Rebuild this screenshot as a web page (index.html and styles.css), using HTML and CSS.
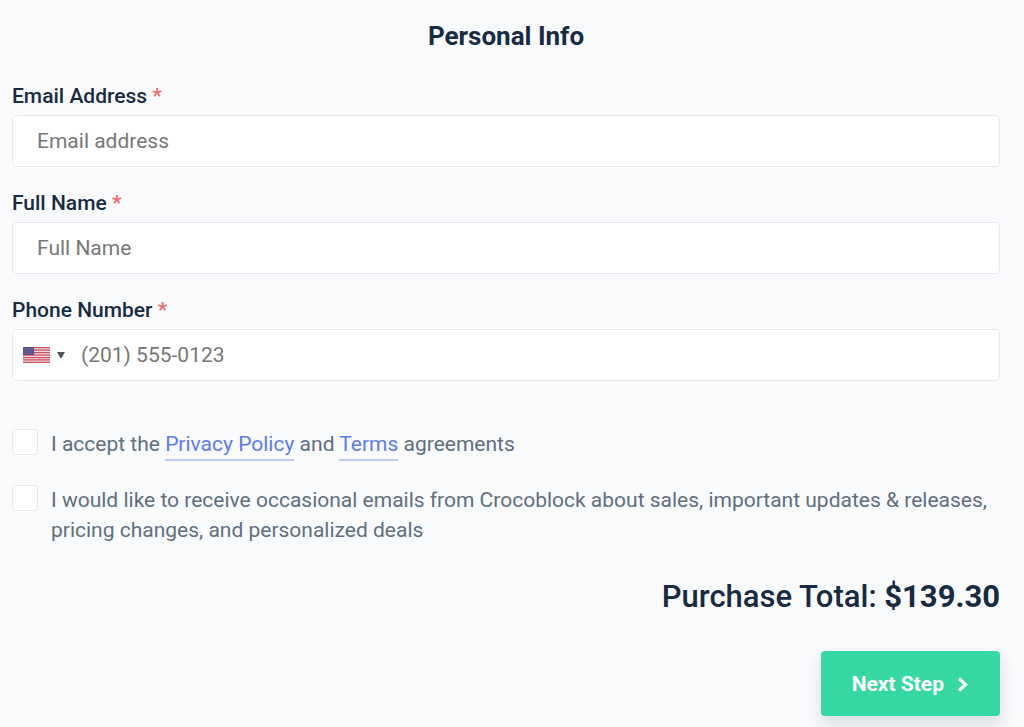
FILE: index.html
```html
<!DOCTYPE html>
<html lang="en">
<head>
<meta charset="utf-8">
<meta name="viewport" content="width=device-width, initial-scale=1">
<title>Personal Info</title>
<link rel="stylesheet" href="styles.css">
</head>
<body>
<form class="checkout">
  <h1 class="title">Personal Info</h1>
  <div class="fields">
    <div class="field">
      <label class="label" for="email">Email Address <span class="required">*</span></label>
      <input class="input" id="email" type="email" placeholder="Email address">
    </div>
    <div class="field">
      <label class="label" for="name">Full Name <span class="required">*</span></label>
      <input class="input" id="name" type="text" placeholder="Full Name">
    </div>
    <div class="field">
      <label class="label" for="phone">Phone Number <span class="required">*</span></label>
      <div class="phone">
        <button class="country" type="button" aria-label="Country: United States">
          <svg class="flag" viewBox="0 0 27 16" aria-hidden="true">
            <rect width="27" height="16" fill="#efd9dd"/>
            <path d="M0 .6h27M0 3.1h27M0 5.6h27M0 8h27M0 10.5h27M0 12.9h27M0 15.4h27" stroke="#d0505f" stroke-width="1.25"/>
            <rect width="11" height="8" fill="#5a5588"/>
            <path d="M1 1.5h10M1 4h10M1 6.5h10" stroke="#7773a0" stroke-width=".6" stroke-dasharray="1 1"/>
          </svg>
          <svg class="caret" viewBox="0 0 8 6" aria-hidden="true"><path d="M0 0h8L4.600 6H3.400z" fill="#555"/></svg>
        </button>
        <input class="phone-input" id="phone" type="tel" placeholder="(201) 555-0123">
      </div>
    </div>
  </div>
  <div class="agreements">
    <div class="agreement">
      <input class="check" id="accept" type="checkbox">
      <label for="accept">I accept the <a class="link" href="#privacy">Privacy Policy</a> and <a class="link" href="#terms">Terms</a> agreements</label>
    </div>
    <div class="agreement">
      <input class="check" id="news" type="checkbox">
      <label for="news">I would like to receive occasional emails from Crocoblock about sales, important updates &amp; releases, pricing changes, and personalized deals</label>
    </div>
  </div>
  <p class="total">Purchase Total: <strong>$139.30</strong></p>
  <button class="next" type="submit">Next Step
    <svg class="chevron" viewBox="0 0 12 16" aria-hidden="true"><path d="M2 2.500l6.500 6L2 14.500" fill="none" stroke="#fff" stroke-width="3.200"/></svg>
  </button>
</form>
</body>
</html>
```
FILE: styles.css
```css
* {
  box-sizing: border-box;
}

body {
  margin: 0;
  background: #f9fafc;
  color: #5f6f7e;
  font: 400 21px/30px Roboto, "Liberation Sans", sans-serif;
}

.checkout {
  display: flex;
  flex-direction: column;
  padding: 20px 24px 11px 12px;
}

.title {
  margin: 0;
  color: #172b42;
  font-size: 26px;
  font-weight: 700;
  line-height: 32px;
  text-align: center;
}

.fields {
  display: grid;
  gap: 21px;
  margin-top: 29px;
}

.field {
  display: grid;
  gap: 4px;
}

.label {
  color: #172b42;
  font-weight: 500;
}

.required {
  color: #f36c71;
  font-weight: 700;
}

.input,
.phone {
  width: 100%;
  height: 52px;
  border: 1px solid #e4e8ed;
  border-radius: 5px;
  background: #fff;
}

.input {
  padding: 0 24px;
  font: inherit;
}

.phone {
  display: flex;
}

.country {
  display: flex;
  align-items: center;
  gap: 7px;
  padding: 0 10px;
  border: 0;
  background: none;
}

.flag {
  width: 27px;
  height: 16px;
}

.caret {
  width: 8px;
  height: 6px;
}

.phone-input {
  flex: 1;
  min-width: 0;
  padding: 0 24px 0 6px;
  border: 0;
  background: none;
  font: inherit;
}

.input::placeholder,
.phone-input::placeholder {
  color: #777;
}

.agreements {
  display: grid;
  gap: 26px;
  margin-top: 48px;
}

.agreement {
  display: flex;
  align-items: flex-start;
  gap: 13px;
}

.check {
  flex: none;
  width: 26px;
  height: 26px;
  margin: 0;
  border: 1px solid #e4e8ed;
  border-radius: 4px;
  background: #fff;
  appearance: none;
}

.check:checked {
  background: #35d8a2;
}

.link {
  padding-bottom: 3px;
  border-bottom: 2px solid #bdcaf8;
  color: #5c7cec;
  text-decoration: none;
}

.total {
  margin: 32px 0 0;
  color: #172b42;
  font-size: 31px;
  font-weight: 500;
  line-height: 40px;
  text-align: right;
}

.total strong {
  font-weight: 700;
}

.next {
  display: flex;
  align-items: center;
  align-self: flex-end;
  gap: 13px;
  height: 65px;
  margin-top: 34px;
  padding: 0 31px;
  border: 0;
  border-radius: 4px;
  background: #35d8a2;
  box-shadow: 0 8px 16px rgba(23, 43, 66, 0.15);
  color: #fff;
  font: inherit;
  font-weight: 700;
}

.chevron {
  width: 12px;
  height: 16px;
}
```
